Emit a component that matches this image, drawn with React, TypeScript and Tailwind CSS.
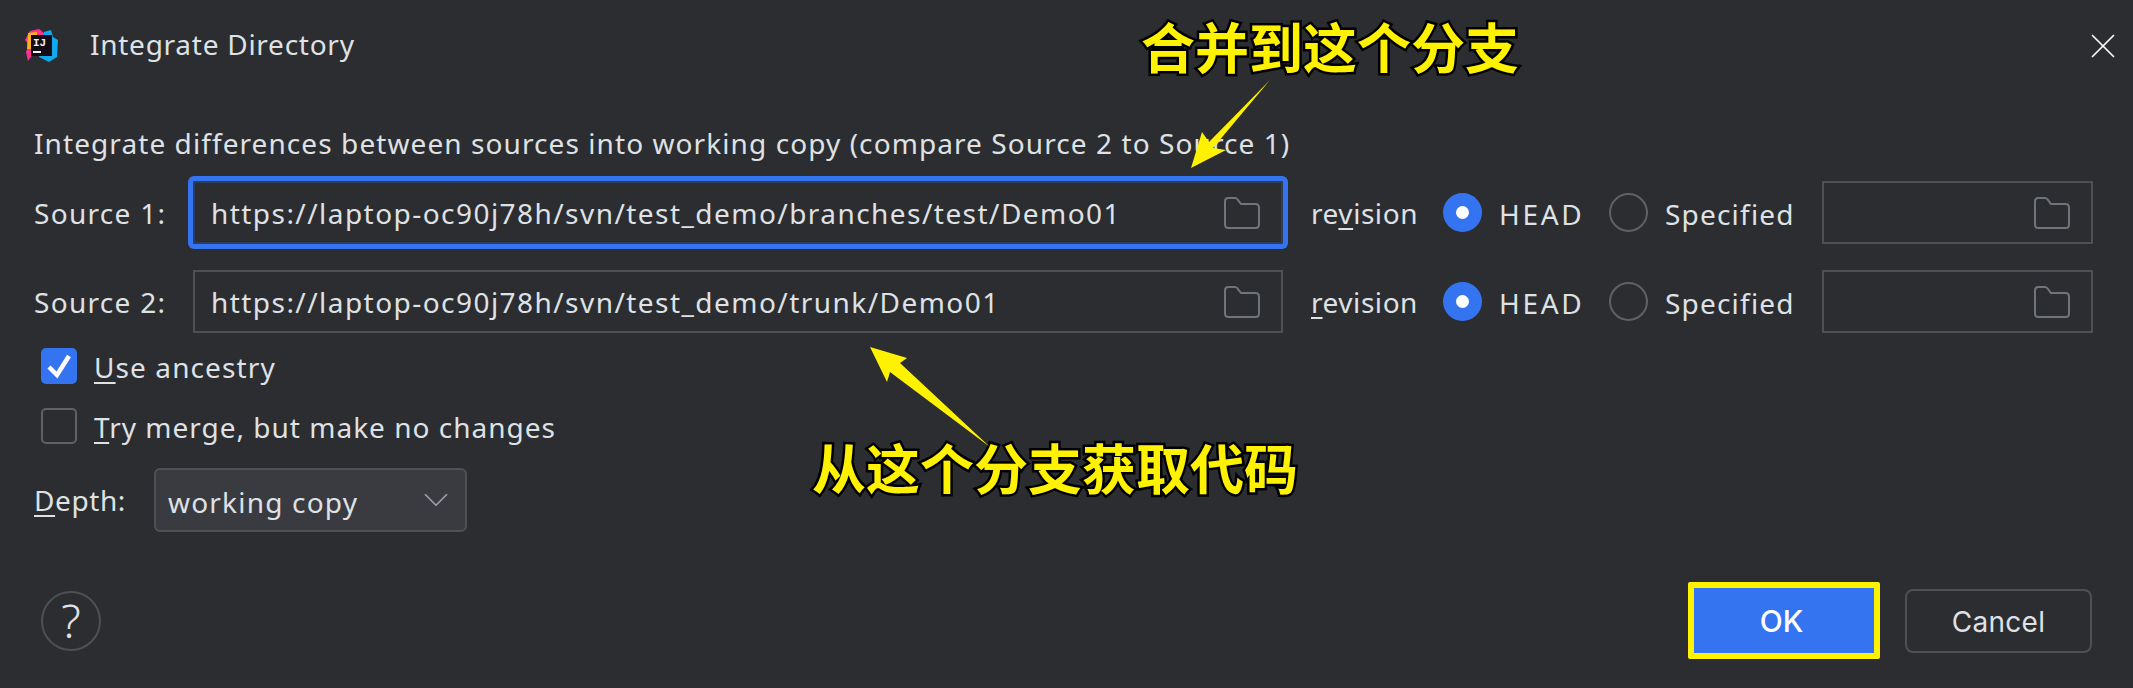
import { ChevronDown, X } from "lucide-react";

function FolderIcon() {
  return (
    <svg width="36" height="32" viewBox="0 0 36 32" fill="none" className="shrink-0">
      <path
        d="M1 4.5 C1 2.5 2.2 1 4 1 H11 C12 1 12.7 1.4 13.5 2.3 L17 7 H31.5 C33.5 7 35 8.5 35 10.5 V27.5 C35 29.5 33.5 31 31.5 31 H4.5 C2.5 31 1 29.5 1 27.5 Z"
        stroke="#6f737a"
        strokeWidth="2"
      />
    </svg>
  );
}

function PathField({ value, focused }: { value: string; focused?: boolean }) {
  return (
    <div
      className={
        focused
          ? "flex h-[63px] w-[1090px] shrink-0 items-center justify-between rounded-[2px] border-2 border-[#2f3d5c] pl-[16px] pr-[21px] ring-[5px] ring-[#3574f0]"
          : "flex h-[63px] w-[1090px] shrink-0 items-center justify-between border-2 border-[#4e5054] pl-[16px] pr-[21px]"
      }
    >
      <span className="tracking-[1.45px]">{value}</span>
      <FolderIcon />
    </div>
  );
}

function Radio({ checked }: { checked?: boolean }) {
  return (
    <span
      className={
        checked
          ? "flex h-[39px] w-[39px] shrink-0 items-center justify-center rounded-full bg-[#3574f0]"
          : "h-[39px] w-[39px] shrink-0 rounded-full border-2 border-[#5f6166]"
      }
    >
      {checked && <span className="h-[13px] w-[13px] rounded-full bg-white" />}
    </span>
  );
}

function SourceRow({
  label,
  value,
  revision,
  focused,
}: {
  label: string;
  value: string;
  revision: React.ReactNode;
  focused?: boolean;
}) {
  return (
    <div className="flex h-[63px] items-center">
      <span className="w-[159px] shrink-0 tracking-[1.3px]">{label}</span>
      <PathField value={value} focused={focused} />
      <span className="ml-[28px] w-[132px] shrink-0 tracking-[0.55px]">{revision}</span>
      <Radio checked />
      <span className="ml-[17px] w-[110px] shrink-0 pt-[3px] tracking-[2.7px]">HEAD</span>
      <Radio />
      <span className="ml-[17px] w-[157px] shrink-0 pt-[3px] tracking-[1.2px]">Specified</span>
      <div className="flex h-[63px] w-[271px] shrink-0 items-center justify-end border-2 border-[#4e5054] pr-[21px]">
        <FolderIcon />
      </div>
    </div>
  );
}

function Logo() {
  return (
    <svg width="34" height="34" viewBox="0 0 34 34" className="shrink-0">
      <path d="M5 2 L14 0 L20 5 L12 20 L3 32 L1 23 L4 16 L0 11 Z" fill="#ff2f8e" />
      <path d="M3 4 L12 3 L12 20 L2 20 Z" fill="#ffb01f" />
      <path d="M19 3 L26 1 L28 8 L33 11 L32 28 L24 33 L18 30 L14 28 Z" fill="#10a8ee" />
      <rect x="6" y="6" width="21" height="21" fill="#140c14" />
      <text x="8" y="17" fontFamily="Liberation Mono, monospace" fontWeight="700" fontSize="11" fill="#f2eff2">
        IJ
      </text>
      <rect x="8" y="22" width="8" height="2" fill="#f2eff2" />
    </svg>
  );
}

export default function App() {
  return (
    <div className="relative flex h-[688px] w-[2133px] flex-col overflow-hidden bg-[#2b2d30] font-['Noto_Sans','Noto_Sans_CJK_SC',sans-serif] text-[28px] text-[#dfe1e5]">
      {/* title bar */}
      <div className="flex h-[91px] items-center justify-between pl-[25px] pr-[9px]">
        <div className="flex items-center gap-[31px]">
          <Logo />
          <span className="pb-[3px] tracking-[0.74px]">Integrate Directory</span>
        </div>
        <X className="h-[42px] w-[42px] text-white" strokeWidth={1} />
      </div>

      <div className="flex flex-1 flex-col px-[34px]">
        <div className="mt-[33px] h-[57px] leading-[39px] tracking-[1.08px]">
          Integrate differences between sources into working copy (compare Source 2 to Source 1)
        </div>

        <div className="flex flex-col gap-[26px]">
          <SourceRow
            label="Source 1:"
            value="https://laptop-oc90j78h/svn/test_demo/branches/test/Demo01"
            revision={
              <>
                re<span className="underline decoration-2 underline-offset-4">v</span>ision
              </>
            }
            focused
          />
          <SourceRow
            label="Source 2:"
            value="https://laptop-oc90j78h/svn/test_demo/trunk/Demo01"
            revision={
              <>
                <span className="underline decoration-2 underline-offset-4">r</span>evision
              </>
            }
          />
        </div>

        <div className="mt-[15px] flex h-[36px] items-center pl-[7px]">
          <span className="flex h-[36px] w-[36px] items-center justify-center rounded-[5px] bg-[#3574f0]">
            <svg width="36" height="36" viewBox="0 0 36 36" fill="none">
              <path d="M8 19 L16 27 L28 8" stroke="#fff" strokeWidth="4.5" />
            </svg>
          </span>
          <span className="ml-[17px] pt-[2px] tracking-[1.1px]">
            <span className="underline decoration-2 underline-offset-4">U</span>se ancestry
          </span>
        </div>

        <div className="mt-[24px] flex h-[36px] items-center pl-[7px]">
          <span className="h-[36px] w-[36px] rounded-[5px] border-2 border-[#5f6166]" />
          <span className="ml-[17px] pt-[2px] tracking-[1px]">
            <span className="underline decoration-2 underline-offset-4">T</span>ry merge, but make no changes
          </span>
        </div>

        <div className="mt-[24px] flex h-[64px] items-center">
          <span className="w-[120px] tracking-[0.6px]">
            <span className="underline decoration-2 underline-offset-4">D</span>epth:
          </span>
          <div className="flex h-[64px] w-[313px] items-center justify-between rounded-[6px] border-2 border-[#4e5054] bg-[#393b40] pl-[12px] pr-[8px]">
            <span className="pt-[3px] tracking-[1.2px]">working copy</span>
            <ChevronDown className="h-[42px] w-[42px] text-[#9da0a8]" strokeWidth={1} />
          </div>
        </div>

        {/* footer */}
        <div className="mt-[50px] flex items-center justify-between pl-[7px] pr-[7px]">
          <div className="flex h-[60px] w-[60px] items-center justify-center rounded-full border-2 border-[#4e5054] text-[46px] font-light">
            ?
          </div>
          <div className="flex items-center gap-[25px] font-['Inter',sans-serif] text-[28px]">
            <button className="flex h-[77px] w-[192px] items-center justify-center rounded-[2px] border-[6px] border-[#fff200] bg-[#3574f0] pr-[5px] pt-[2px] text-[30px] font-medium text-white">
              OK
            </button>
            <button className="flex h-[64px] w-[187px] items-center justify-center rounded-[8px] border-2 border-[#4e5054] pt-[2px] tracking-[0.3px]">
              Cancel
            </button>
          </div>
        </div>
      </div>

      {/* annotations drawn over the dialog */}
      <div className="absolute left-[1141px] top-[12px] text-[54px] font-bold leading-[72px] text-[#fff200] [-webkit-text-stroke:5px_#000] [paint-order:stroke_fill]">
        合并到这个分支
      </div>
      <div className="absolute left-[812px] top-[433px] text-[54px] font-bold leading-[72px] text-[#fff200] [-webkit-text-stroke:5px_#000] [paint-order:stroke_fill]">
        从这个分支获取代码
      </div>
      <svg className="absolute left-0 top-0" width="2133" height="688" viewBox="0 0 2133 688">
        <polygon points="1270,80 1213,148 1226,150 1191,168 1202,132 1209,142" fill="#fff200" />
        <polygon points="870,347 907,358 900,363 990,447 890,372 887,382" fill="#fff200" />
      </svg>
    </div>
  );
}
